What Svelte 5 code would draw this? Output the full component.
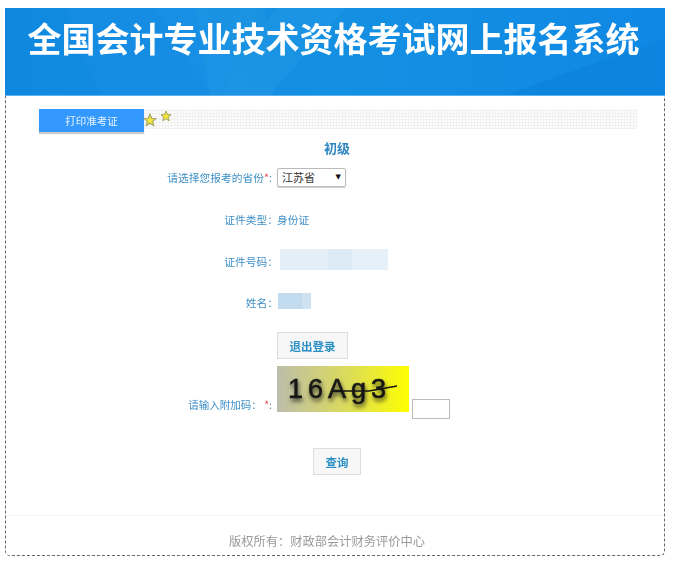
<script lang="ts">
  const title = '全国会计专业技术资格考试网上报名系统';
</script>

<div class="frame">
  <header class="banner">
    <svg class="shapes" viewBox="0 0 660 87" preserveAspectRatio="none" aria-hidden="true">
      <polygon points="60,0 200,0 250,87 95,87" fill="#1a8ee6" opacity="0.55" />
      <polygon points="215,87 270,0 340,0 265,87" fill="#2a9fe8" opacity="0.3" />
      <polygon points="190,0 260,0 268,87 205,87" fill="#1f95e2" opacity="0.5" />
      <polygon points="150,0 250,0 262,87 205,87" fill="#1d94e4" opacity="0.35" />
      <polygon points="500,87 660,30 660,87" fill="#0c82dc" opacity="0.6" />
    </svg>
    <h1>{title}</h1>
  </header>

  <div class="tabs">
    <button class="tab">打印准考证</button>
    <div class="dots">
      <svg class="star s1" viewBox="0 0 24 24" aria-hidden="true"><path d="M12 2l3 7 7 .6-5.300 4.700 1.700 7.200L12 17.600 5.600 21.500l1.700-7.200L2 9.600 9 9z" /></svg>
      <svg class="star s2" viewBox="0 0 24 24" aria-hidden="true"><path d="M12 2l3 7 7 .6-5.300 4.700 1.700 7.200L12 17.600 5.600 21.500l1.700-7.200L2 9.600 9 9z" /></svg>
    </div>
  </div>

  <h2>初级</h2>

  <div class="form">
    <div class="row r-province">
      <span class="label">请选择您报考的省份<i>*</i>:</span>
      <div class="fake-select">江苏省<span class="arrow">▼</span></div>
    </div>
    <div class="row r-type">
      <span class="label wide-colon">证件类型：</span>
      <span class="value">身份证</span>
    </div>
    <div class="row r-id">
      <span class="label wide-colon">证件号码：</span>
      <div class="mask mask-id"><b></b><b></b><b></b></div>
    </div>
    <div class="row r-name">
      <span class="label wide-colon">姓名：</span>
      <div class="mask mask-name"><b></b></div>
    </div>
    <div class="row r-logout">
      <span></span>
      <button class="btn logout">退出登录</button>
    </div>
    <div class="row r-captcha">
      <span class="label captcha-label">请输入附加码： <i>*</i><em>:</em></span>
      <div class="captcha-wrap">
        <svg class="captcha" viewBox="0 0 132 46" aria-hidden="true">
          <defs>
            <linearGradient id="cg" x1="0" x2="1" y1="0" y2="0">
              <stop offset="0" stop-color="#bdbdac" />
              <stop offset="0.55" stop-color="#dcdc58" />
              <stop offset="1" stop-color="#ffff00" />
            </linearGradient>
          </defs>
          <rect width="132" height="46" fill="url(#cg)" />
          <text class="captcha-text" x="11" y="32" letter-spacing="5">16Ag3</text>
          <path d="M60 25 L92 25 L120 20" stroke="#151515" stroke-width="1.4" fill="none" />
        </svg>
        <input class="code" type="text" />
      </div>
    </div>
    <div class="row r-submit">
      <button class="btn query">查询</button>
    </div>
  </div>

  <footer>版权所有：财政部会计财务评价中心</footer>
</div>

<style>
  :global(body) {
    margin: 0;
    background: #fff;
    font-family: "Noto Sans CJK SC", "Liberation Sans", sans-serif;
  }

  .frame {
    box-sizing: border-box;
    width: 660px;
    height: 548px;
    margin: 8px 0 0 5px;
    border: 1px dashed #666;
    border-top: 0;
    border-radius: 0 0 5px 5px;
    display: flex;
    flex-direction: column;
  }

  .banner {
    position: relative;
    height: 88px;
    margin: 0 -1px;
    background: linear-gradient(90deg, #1088e0, #1490e2 50%, #0f88e4);
    border-bottom: 1px solid #5fb2f0;
    box-sizing: border-box;
    overflow: hidden;
    filter: blur(0.5px);
  }

  .shapes {
    position: absolute;
    inset: 0;
    width: 100%;
    height: 100%;
  }

  h1 {
    position: relative;
    margin: 0;
    padding: 5px 3px 0 0;
    font-size: 34px;
    line-height: 50px;
    font-weight: 700;
    color: #fff;
    text-align: center;
    white-space: nowrap;
  }

  .tabs {
    display: flex;
    margin: 13px 27px 0 33px;
    height: 23px;
    flex: none;
  }

  .tab {
    width: 105px;
    height: 23px;
    border: 0;
    padding: 0;
    background: #3399ff;
    color: #e8f3ff;
    font: 10.5px "Noto Sans CJK SC", sans-serif;
    box-shadow: 0 2px 1px #ccc;
    filter: blur(0.4px);
  }

  .dots {
    position: relative;
    flex: 1;
    height: 20px;
    background-color: #fdfdfd;
    background-image:
      repeating-linear-gradient(90deg, #f1f1f1 0 1px, transparent 1px 3px),
      repeating-linear-gradient(0deg, #f1f1f1 0 1px, transparent 1px 3px);
  }

  .star {
    position: absolute;
    fill: #f1e23c;
    stroke: #a3a866;
    stroke-width: 2;
  }

  .s1 { left: -1px; top: 4px; width: 14px; height: 14px; }
  .s2 { left: 16px; top: 1px; width: 12px; height: 12px; }

  h2 {
    margin: 7px 0 0;
    padding-left: 4px;
    height: 18px;
    font-size: 13px;
    line-height: 18px;
    font-weight: 700;
    text-align: center;
    color: #2f86c2;
    filter: blur(0.35px);
  }

  .form {
    display: flex;
    flex-direction: column;
    flex: 1;
  }

  .row {
    display: grid;
    grid-template-columns: 266px 1fr;
    column-gap: 5px;
    align-items: center;
    font-size: 10.75px;
    color: #3d8fc6;
  }

  .label,
  .value {
    filter: blur(0.45px);
    white-space: nowrap;
  }

  .label {
    text-align: right;
  }

  .wide-colon {
    margin-right: -6px;
  }

  .label i {
    color: #ef4a4a;
    font-style: normal;
  }

  .label em {
    color: #777;
    font-style: normal;
  }

  .r-province { margin-top: 10px; height: 20px; }
  .r-type { margin-top: 22px; height: 20px; }
  .r-id { margin-top: 21px; height: 22px; }
  .r-name { margin-top: 20px; height: 20px; }
  .r-logout { margin-top: 20px; height: 27px; }
  .r-captcha { margin-top: 7px; height: 53px; align-items: end; }
  .r-submit { margin-top: 29px; height: 27px; display: flex; padding-left: 307px; }

  .fake-select {
    box-sizing: border-box;
    width: 69px;
    height: 19px;
    padding: 0 4px;
    border: 1px solid #bbb;
    border-radius: 2px;
    box-shadow: 0 1px 1px #ccc;
    display: flex;
    align-items: center;
    justify-content: space-between;
    color: #333;
    font-size: 11px;
  }

  .arrow {
    font-size: 7px;
    color: #111;
    font-family: "DejaVu Sans", sans-serif;
  }

  .mask {
    display: flex;
    align-self: start;
  }

  .mask-id { width: 108px; height: 21px; margin: -1px 0 0 3px; }
  .mask-id b { background: #e3eef7; flex: 48; }
  .mask-id b:nth-child(2) { background: #dcebf6; flex: 24; }
  .mask-id b:nth-child(3) { background: #e6f0f8; flex: 36; }

  .mask-name { width: 33px; height: 16px; margin: 1px 0 0 1px; background: #cfe2f2; }
  .mask-name b { display: block; width: 24px; background: #c3dbef; }

  .btn {
    box-sizing: border-box;
    height: 27px;
    padding: 0;
    background: #f7f7f7;
    border: 1px solid #ddd;
    color: #2b8fc4;
    font: 700 11.5px "Noto Sans CJK SC", sans-serif;
    filter: blur(0.3px);
  }

  .logout { width: 71px; }
  .query { width: 48px; }

  .captcha-label {
    padding-bottom: 7px;
    font-size: 10.5px;
  }

  .captcha-wrap {
    display: flex;
    align-items: flex-end;
    gap: 3px;
  }

  .captcha {
    width: 132px;
    height: 46px;
    margin-bottom: 7px;
    display: block;
    filter: blur(0.4px);
  }

  .captcha-text {
    font-family: "Liberation Sans", sans-serif;
    font-size: 27px;
    fill: #161616;
    stroke: #161616;
    stroke-width: 0.6px;
    filter: drop-shadow(1px 3px 2px rgba(20, 20, 20, 0.75));
  }

  .code {
    box-sizing: border-box;
    width: 38px;
    height: 20px;
    padding: 0;
    border: 1px solid #bbb;
    background: #fff;
  }

  footer {
    flex: none;
    height: 40px;
    border-top: 1px solid #f3f3f3;
    padding: 16px 16px 0 0;
    box-sizing: border-box;
    text-align: center;
    font-size: 12.25px;
    line-height: 18px;
    color: #999;
    filter: blur(0.45px);
  }
</style>
